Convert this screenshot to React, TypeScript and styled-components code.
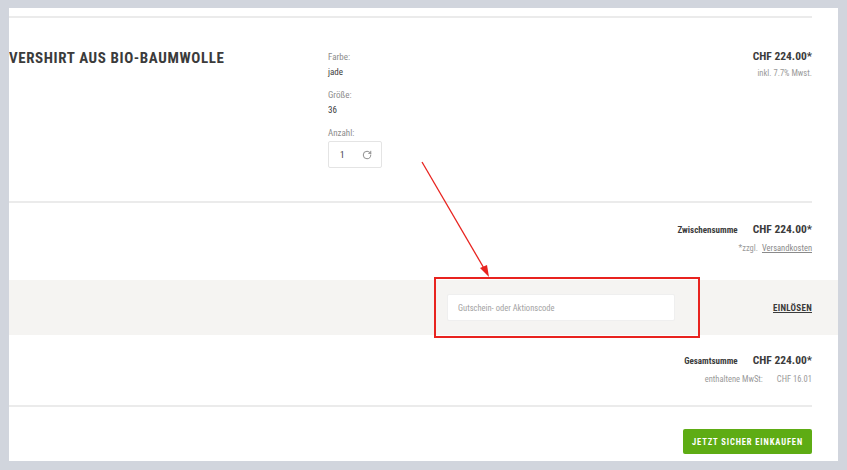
import React from "react";
import styled, { createGlobalStyle } from "styled-components";
import { RotateCw } from "lucide-react";

const FONT = `"Roboto Condensed", "Liberation Sans Narrow", "DejaVu Sans Condensed", Roboto, sans-serif`;

const GlobalStyle = createGlobalStyle`
  html, body {
    margin: 0;
    padding: 0;
    background: #d1d5dd;
    font-family: ${FONT};
  }
  * {
    box-sizing: border-box;
  }
`;

const Page = styled.div`
  height: 470px;
  padding: 8px 9px 9px;
`;

const Panel = styled.div`
  position: relative;
  height: 453px;
  background: #fff;
  overflow: hidden;
  padding-top: 8px;
`;

const Section = styled.div<{ $rule?: boolean }>`
  margin-right: 26px;
  border-bottom: ${({ $rule }) => ($rule ? "2px solid #ebebeb" : "none")};
`;

const ProductRow = styled(Section)`
  display: grid;
  grid-template-columns: 319px 1fr auto;
  padding: 30px 0 33px;
`;

const Title = styled.h2`
  margin: 1px 0 0;
  font-size: 15px;
  line-height: 18px;
  font-weight: 700;
  letter-spacing: 0.6px;
  color: #3b3b3b;
  white-space: nowrap;
`;

const Attributes = styled.div`
  display: flex;
  flex-direction: column;
  padding-top: 2px;
`;

const AttrLabel = styled.span`
  font-size: 9px;
  line-height: 15px;
  color: #8c8c8c;
`;

const AttrValue = styled.span`
  font-size: 9px;
  line-height: 15px;
  color: #3b3b3b;
  margin-bottom: 8px;
`;

const QtyBox = styled.div`
  display: flex;
  align-items: center;
  justify-content: space-between;
  width: 54px;
  height: 27px;
  padding: 0 9px 0 11px;
  border: 1px solid #e4e4e4;
  border-radius: 2px;
  font-size: 9px;
  color: #3b3b3b;
`;

const PriceCol = styled.div`
  display: flex;
  flex-direction: column;
  align-items: flex-end;
  gap: 2px;
`;

const Price = styled.span`
  font-size: 11.5px;
  line-height: 16px;
  font-weight: 700;
  color: #3b3b3b;
`;

const Note = styled.span`
  font-size: 8.5px;
  line-height: 15px;
  color: #9a9a9a;
`;

const SummaryBlock = styled(Section)`
  display: flex;
  flex-direction: column;
  align-items: flex-end;
  gap: 3px;
`;

const SubtotalBlock = styled(SummaryBlock)`
  height: 77px;
  padding-top: 18px;
`;

const TotalBlock = styled(SummaryBlock)`
  height: 72px;
  padding-top: 17px;
`;

const SumRow = styled.div`
  display: flex;
  align-items: baseline;
  gap: 15px;
`;

const SumLabel = styled.span`
  font-size: 9px;
  font-weight: 700;
  color: #3b3b3b;
`;

const NoteRow = styled.div`
  display: flex;
  align-items: baseline;
  gap: 4px;
  font-size: 8.5px;
  line-height: 16px;
  color: #9a9a9a;
`;

const NoteLink = styled.a`
  color: #8a8a8a;
  text-decoration: underline;
`;

const TaxRow = styled(NoteRow)`
  gap: 14px;
`;

const VoucherBand = styled.div`
  display: flex;
  align-items: center;
  justify-content: flex-end;
  height: 55px;
  padding-right: 26px;
  background: #f5f4f2;
  gap: 98px;
`;

const VoucherInput = styled.input`
  width: 228px;
  height: 27px;
  padding: 0 10px;
  border: 1px solid #efefef;
  border-radius: 2px;
  background: #fff;
  font-family: ${FONT};
  font-size: 8.5px;
  color: #3b3b3b;
  outline: none;

  &::placeholder {
    color: #a3a3a3;
  }
`;

const RedeemLink = styled.a`
  font-size: 9px;
  font-weight: 700;
  letter-spacing: 0.3px;
  color: #3b3b3b;
  text-decoration: underline;
`;

const ButtonRow = styled(Section)`
  display: flex;
  justify-content: flex-end;
  padding-top: 22px;
`;

const CheckoutButton = styled.button`
  width: 129px;
  height: 25px;
  border: none;
  border-radius: 2px;
  background: #5eac14;
  color: #fff;
  font-family: ${FONT};
  font-size: 8.5px;
  font-weight: 700;
  letter-spacing: 0.9px;
  cursor: pointer;
`;

/* annotation drawn over the screenshot */
const Highlight = styled.div`
  position: absolute;
  left: 425px;
  top: 269px;
  width: 266px;
  height: 61px;
  border: 2px solid #e8231f;
  pointer-events: none;
`;

const ArrowSvg = styled.svg`
  position: absolute;
  left: 405px;
  top: 150px;
  pointer-events: none;
`;

const App: React.FC = () => {
  return (
    <>
      <GlobalStyle />
      <Page>
        <Panel>
          <Section $rule />

          <ProductRow $rule>
            <Title>VERSHIRT AUS BIO-BAUMWOLLE</Title>
            <Attributes>
              <AttrLabel>Farbe:</AttrLabel>
              <AttrValue>jade</AttrValue>
              <AttrLabel>Größe:</AttrLabel>
              <AttrValue>36</AttrValue>
              <AttrLabel>Anzahl:</AttrLabel>
              <QtyBox>
                <span>1</span>
                <RotateCw size={10} strokeWidth={1.8} color="#6a6a6a" />
              </QtyBox>
            </Attributes>
            <PriceCol>
              <Price>CHF 224.00*</Price>
              <Note>inkl. 7.7% Mwst.</Note>
            </PriceCol>
          </ProductRow>

          <SubtotalBlock>
            <SumRow>
              <SumLabel>Zwischensumme</SumLabel>
              <Price>CHF 224.00*</Price>
            </SumRow>
            <NoteRow>
              <span>*zzgl.</span>
              <NoteLink href="#">Versandkosten</NoteLink>
            </NoteRow>
          </SubtotalBlock>

          <VoucherBand>
            <VoucherInput placeholder="Gutschein- oder Aktionscode" />
            <RedeemLink href="#">EINLÖSEN</RedeemLink>
          </VoucherBand>

          <TotalBlock $rule>
            <SumRow>
              <SumLabel>Gesamtsumme</SumLabel>
              <Price>CHF 224.00*</Price>
            </SumRow>
            <TaxRow>
              <span>enthaltene MwSt:</span>
              <span>CHF 16.01</span>
            </TaxRow>
          </TotalBlock>

          <ButtonRow>
            <CheckoutButton>JETZT SICHER EINKAUFEN</CheckoutButton>
          </ButtonRow>

          <Highlight />
          <ArrowSvg width="90" height="125" viewBox="0 0 90 125">
            <line x1="8" y1="4" x2="71" y2="112" stroke="#e8231f" strokeWidth="1.3" />
            <polygon points="75,119 66,110 73,107" fill="#e8231f" />
          </ArrowSvg>
        </Panel>
      </Page>
    </>
  );
};

export default App;
